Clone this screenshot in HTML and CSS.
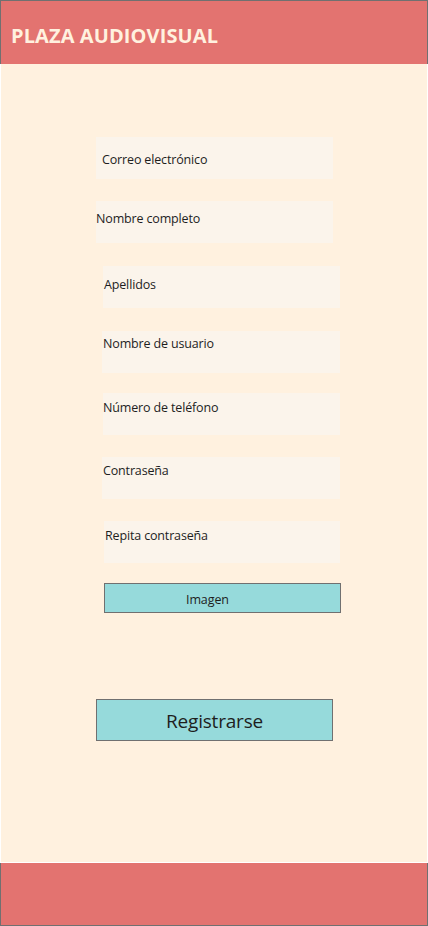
FILE: index.html
```html
<!DOCTYPE html>
<html lang="es">
<head>
<meta charset="utf-8">
<title>Plaza Audiovisual - Registro</title>
<link rel="stylesheet" href="styles.css">
</head>
<body>
<div class="page">
  <header class="topbar">
    <h1 class="brand">PLAZA AUDIOVISUAL</h1>
  </header>
  <main class="content">
    <form class="form">
      <div class="field f1">Correo electrónico</div>
      <div class="field f2">Nombre completo</div>
      <div class="field f3">Apellidos</div>
      <div class="field f4">Nombre de usuario</div>
      <div class="field f5">Número de teléfono</div>
      <div class="field f6">Contraseña</div>
      <div class="field f7">Repita contraseña</div>
      <div class="btn-image">Imagen</div>
      <div class="btn-submit">Registrarse</div>
    </form>
  </main>
  <footer class="bottombar"></footer>
</div>
</body>
</html>
```
FILE: styles.css
```css
* { box-sizing: border-box; }
html, body { margin: 0; padding: 0; }
body {
  background: #fff1df;
  font-family: "Open Sans", "Noto Sans", sans-serif;
  color: #1e1e1e;
}
.page {
  width: 428px;
  height: 926px;
  display: flex;
  flex-direction: column;
}
.topbar {
  height: 64px;
  background: #e37370;
  border: 1px solid #707070;
  border-bottom: none;
  padding: 23px 0 0 10px;
}
.brand {
  margin: 0;
  font-size: 20px;
  font-weight: 700;
  color: #fff1df;
  line-height: 24px;
  letter-spacing: 0.1px;
}
.content {
  flex: 1;
  border-left: 1px solid #fff;
  border-right: 1px solid #fff;
  border-bottom: 1px solid #fff;
  padding-top: 73px;
}
.form {
  display: flex;
  flex-direction: column;
  align-items: flex-start;
  padding-left: 95px;
}
.field {
  width: 237px;
  height: 42px;
  background: #fbf4eb;
  font-size: 12.5px;
  letter-spacing: -0.15px;
  line-height: 16px;
  padding-left: 1px;
}
.f1 { padding-top: 15px; padding-left: 6px; }
.f2 { margin-top: 22px; padding-top: 10px; padding-left: 0; }
.f3 { margin-top: 23px; margin-left: 7px; padding-top: 11px; }
.f4 { margin-top: 23px; margin-left: 6px; padding-top: 5px; width: 238px; }
.f5 { margin-top: 20px; margin-left: 7px; padding-top: 7px; padding-left: 0; }
.f6 { margin-top: 22px; margin-left: 6px; padding-top: 6px; width: 238px; }
.f7 { margin-top: 22px; margin-left: 8px; padding-top: 7px; width: 236px; }
.btn-image {
  margin-top: 20px;
  margin-left: 8px;
  width: 237px;
  height: 30px;
  background: #96dadb;
  border: 1px solid #707070;
  font-size: 12.5px;
  letter-spacing: -0.1px;
  line-height: 28px;
  padding: 2px 0 0 81px;
}
.btn-submit {
  margin-top: 86px;
  width: 237px;
  height: 42px;
  background: #96dadb;
  border: 1px solid #707070;
  font-size: 19px;
  letter-spacing: -0.2px;
  line-height: 40px;
  padding-top: 1px;
  text-align: center;
  color: #1e1e1e;
}
.bottombar {
  height: 63px;
  background: #e37370;
  border: 1px solid #707070;
  border-top: none;
}
```
